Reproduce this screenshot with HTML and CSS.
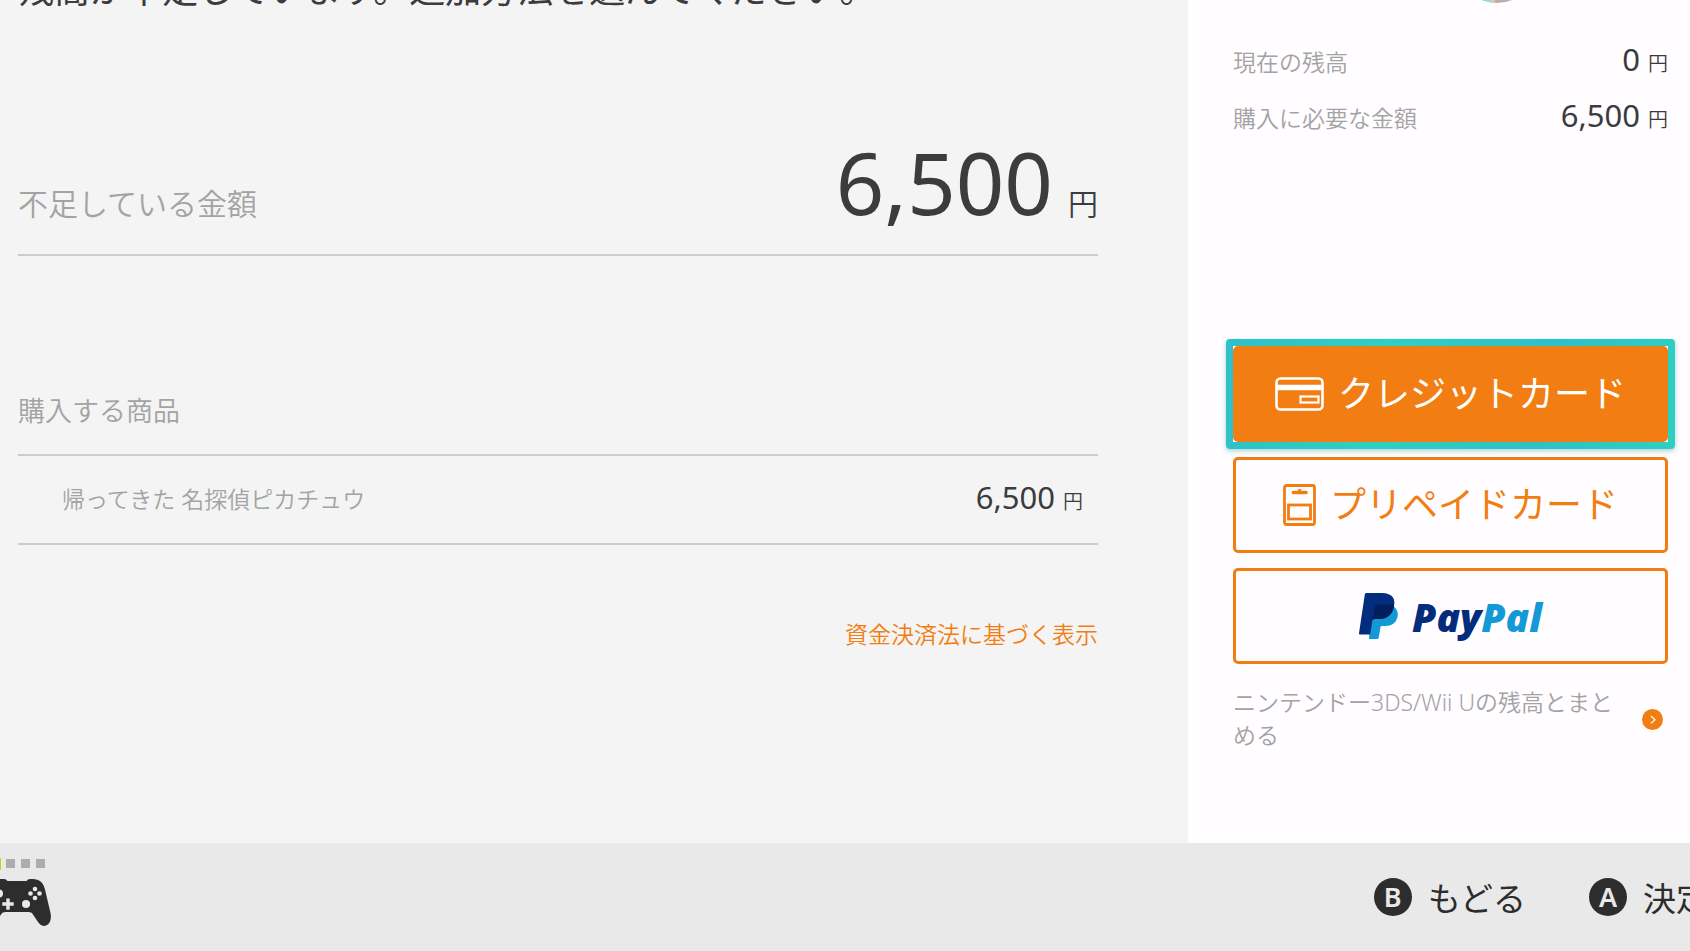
FILE: index.html
```
<!DOCTYPE html>
<html lang="ja">
<head>
  <meta charset="UTF-8">
  <title>残高の追加</title>
  <link rel="stylesheet" href="styles.css">
</head>
<body>
  <div class="container">
    <main class="main">
      <h1>残高が不足しています。追加方法を選んでください。</h1>
      <div class="shortage">
        <span class="shortage-label">不足している金額</span>
        <span class="shortage-price">6,500<small>円</small></span>
      </div>
      <table class="items">
        <caption>購入する商品</caption>
        <tr>
          <td>帰ってきた 名探偵ピカチュウ</td>
          <td class="price">6,500<small>円</small></td>
        </tr>
      </table>
      <a href="#" class="law-link">資金決済法に基づく表示</a>
    </main>

    <aside class="sidebar">
      <svg class="avatar" viewBox="0 0 80 80">
        <clipPath id="avatar-clip"><circle cx="40" cy="40" r="40"/></clipPath>
        <g clip-path="url(#avatar-clip)">
          <rect width="80" height="80" fill="#b4b0ae"/>
          <rect width="34" height="80" fill="#8fdcea"/>
          <rect x="34" width="4" height="80" fill="#e8c49a"/>
        </g>
      </svg>
      <dl class="balance">
        <div class="balance-row">
          <dt>現在の残高</dt>
          <dd class="price">0<small>円</small></dd>
        </div>
        <div class="balance-row">
          <dt>購入に必要な金額</dt>
          <dd class="price">6,500<small>円</small></dd>
        </div>
      </dl>

      <div class="methods">
        <div class="selected">
          <button type="button" class="btn btn-fill">
            <svg width="49" height="34" viewBox="0 0 49 34" fill="none" stroke="currentColor">
              <rect x="1.5" y="1.5" width="46" height="31" rx="4" stroke-width="2.6"/>
              <path d="M1 10.5h47" stroke-width="5.5"/>
              <rect x="25.5" y="19.5" width="18" height="6" stroke-width="2.2"/>
            </svg>
            <span class="btn-text">クレジットカード</span>
          </button>
        </div>
        <button type="button" class="btn">
          <svg width="33" height="42" viewBox="0 0 33 42" fill="none" stroke="currentColor">
            <rect x="1.5" y="1.5" width="30" height="39" rx="2" stroke-width="2.8"/>
            <rect x="5.5" y="21" width="22" height="14" stroke-width="2.8"/>
            <path d="M10.5 8.5h12.5" stroke-width="3.6" stroke-linecap="round"/>
            <path d="M16.7 5v3" stroke-width="3"/>
          </svg>
          <span class="btn-text">プリペイドカード</span>
        </button>
        <button type="button" class="btn">
          <svg width="39" height="46" viewBox="0 0 39 46">
            <path fill="#139ad6" d="M34 13c4 2.500 5.500 6.500 4.500 11-1.400 6-6 9-12 9h-3.500c-.8 0-1.300.5-1.500 1.300L19.600 45c-.1.600-.5 1-1.100 1H11c-.7 0-1.100-.5-1-1.200L14.500 13z"/>
            <path fill="#032d7c" d="M7.500 0H23c5 0 9 1.500 11 4.500 1.600 2.500 1.700 6 .7 10C33 22 28 26 20 26h-4.500c-1.200 0-2 .7-2.200 1.900L11.200 41.500H1c-.7 0-1.100-.5-1-1.200L5.800 1.500C5.900.6 6.600 0 7.500 0z"/>
            <path fill="#021e5c" d="M35 11.800C34.800 20 29 26 20 26h-4.500c-.8 0-1.500.4-1.900 1L15.800 13.200c.2-1 1-1.700 2.100-1.700H30c2 0 3.700.1 5 .3z"/>
          </svg>
          <span class="paypal">Pay<span>Pal</span></span>
        </button>
      </div>

      <a href="#" class="merge-link">
        <span>ニンテンドー3DS/Wii Uの残高とまとめる</span>
        <svg width="21" height="21" viewBox="0 0 21 21" fill="none">
          <circle cx="10.500" cy="10.500" r="10.500" fill="#f27e13"/>
          <path d="M9 7l4 3.700-4 3.700" stroke="#fff" stroke-width="1.200"/>
        </svg>
      </a>
    </aside>
  </div>

  <footer>
    <div class="controller">
      <div class="lights"><i class="on"></i><i></i><i></i><i></i></div>
      <svg width="68" height="47" viewBox="0 0 68 47">
        <path fill="#2d2d2d" d="M24.500 2h19l1.500-1.500c3-.8 7-.6 10 .5 4 1.500 5.800 5 7 9.500L67.500 34c1.200 6-.5 11-4.500 12.500-3.500 1.200-6-.5-8-3.500l-5-7.500c-1.200-1.800-2.500-2.500-4.500-2.500h-23c-2 0-3.300.7-4.500 2.500L13 43c-2 3-4.500 4.700-8 3.500C1 45-.7 40 .5 34L6 10.500C7.200 6 9 2.500 13 1c3-1.100 7-1.300 10-.5z"/>
        <g fill="#e9e9e9">
          <circle cx="16" cy="14.500" r="4"/>
          <circle cx="43" cy="25" r="4"/>
          <circle cx="52" cy="10" r="2.300"/>
          <circle cx="52" cy="19" r="2.300"/>
          <circle cx="47.500" cy="14.500" r="2.300"/>
          <circle cx="56.500" cy="14.500" r="2.300"/>
          <path d="M23.300 19.500h3.400v3.800h4v3.400h-4v4h-3.400v-4h-4v-3.400h4z"/>
        </g>
      </svg>
    </div>
    <div class="hints">
      <button type="button" class="hint"><b>B</b>もどる</button>
      <button type="button" class="hint"><b>A</b>決定</button>
    </div>
  </footer>
</body>
</html>
```
FILE: styles.css
```
* {
  box-sizing: border-box;
}

body {
  margin: 0;
  min-height: 100vh;
  display: flex;
  flex-direction: column;
  overflow: hidden;
  font-family: 'Noto Sans', 'Noto Sans CJK JP', sans-serif;
  font-size: 23px;
  line-height: 33px;
  color: #3c3b3d;
  background-color: #e9e9e9;
}

.container {
  flex: 1;
  display: grid;
  grid-template-columns: 1fr 502px;
}

.main {
  background-color: #f4f4f4;
  padding: 0 90px 0 18px;
}

h1 {
  margin: -36px 0 0;
  font-size: 36px;
  line-height: 52px;
  font-weight: normal;
}

.shortage {
  display: flex;
  justify-content: space-between;
  align-items: baseline;
  margin-top: 117px;
  padding-bottom: 1px;
  border-bottom: 2px solid #cccccc;
}

.shortage-label {
  font-size: 30px;
  font-weight: 350;
  color: #a3a3a3;
}

.shortage-price {
  font-size: 85px;
  line-height: 98px;
}

small {
  font-size: 20px;
  font-weight: 350;
  margin-left: 8px;
}

.shortage-price small {
  font-size: 30px;
  margin-left: 15px;
}

.items {
  width: 100%;
  margin-top: 138px;
  border-collapse: collapse;
}

.items caption {
  font-size: 27px;
  font-weight: 350;
  text-align: left;
  color: #a3a3a3;
  padding-bottom: 27px;
}

.items td {
  height: 89px;
  padding: 0 15px 0 44px;
  border-top: 2px solid #cccccc;
  border-bottom: 2px solid #cccccc;
  font-weight: 350;
  color: #a3a3a3;
}

.price,
.items .price {
  font-size: 31px;
  font-weight: normal;
  text-align: right;
  color: #3c3b3d;
}

.law-link {
  display: block;
  margin-top: 73px;
  text-align: right;
  text-decoration: none;
  font-weight: 350;
  color: #f27e13;
}

.sidebar {
  background-color: #fffdff;
  padding: 0 22px 0 45px;
}

.avatar {
  display: block;
  width: 80px;
  height: 80px;
  margin: -77px 0 0 224px;
}

.balance {
  margin: 28px 0 0;
}

.balance-row {
  display: flex;
  justify-content: space-between;
  align-items: baseline;
  height: 56px;
  line-height: 56px;
}

.balance dt {
  font-weight: 350;
  color: #a3a3a3;
}

.balance dd {
  margin: 0;
}

.methods {
  display: flex;
  flex-direction: column;
  gap: 15px;
  margin-top: 203px;
}

.btn {
  width: 100%;
  height: 96px;
  display: flex;
  align-items: center;
  justify-content: center;
  gap: 14px;
  padding: 0;
  border: 3px solid #f27e13;
  border-radius: 5px;
  background-color: #fffdff;
  color: #f27e13;
  font-family: inherit;
  font-size: 36px;
}

.btn-text {
  padding-bottom: 5px;
}

.btn-fill {
  background-color: #f27e13;
  color: #fff;
}

.selected {
  margin: -7px;
  border: 7px solid transparent;
  border-radius: 4px;
  background: linear-gradient(#fff, #fff) padding-box, linear-gradient(100deg, #2fc0c8, #2ed0c2 35%, #2fc0c8 70%, #2ed0c2) border-box;
  box-shadow: 0 2px 5px rgba(40,150,150,0.4);
}

.paypal {
  font-family: 'Open Sans', sans-serif;
  font-size: 39px;
  font-weight: 800;
  font-style: italic;
  color: #032d7c;
}

.paypal span {
  color: #139ad6;
}

.merge-link {
  display: flex;
  align-items: center;
  justify-content: space-between;
  gap: 8px;
  margin-top: 22px;
  padding-right: 5px;
  font-weight: 350;
  text-decoration: none;
  color: #a3a3a3;
}

.merge-link svg {
  flex: none;
}

footer {
  height: 108px;
  display: flex;
  align-items: center;
  justify-content: space-between;
  margin: 0 -19px 0 -17px;
  background-color: #e9e9e9;
}

.controller {
  padding-bottom: 11px;
}

.controller svg {
  display: block;
}

.lights {
  display: flex;
  align-items: center;
  gap: 6px;
  height: 12px;
  margin-bottom: 9px;
  padding-left: 6px;
}

.lights i {
  width: 9px;
  height: 9px;
  background-color: #adadad;
}

.lights .on {
  width: 12px;
  height: 12px;
  margin-right: -1px;
  background-color: #9bea10;
}

.hints {
  display: flex;
  gap: 63px;
}

.hint {
  display: flex;
  align-items: center;
  gap: 16px;
  padding: 0;
  border: none;
  background: none;
  color: #2d2d2d;
  font-family: inherit;
  font-size: 33px;
  white-space: nowrap;
}

.hint b {
  width: 38px;
  height: 38px;
  border-radius: 50%;
  background-color: #2d2d2d;
  color: #e9e9e9;
  font-size: 27px;
  font-weight: 600;
  line-height: 38px;
}
```
